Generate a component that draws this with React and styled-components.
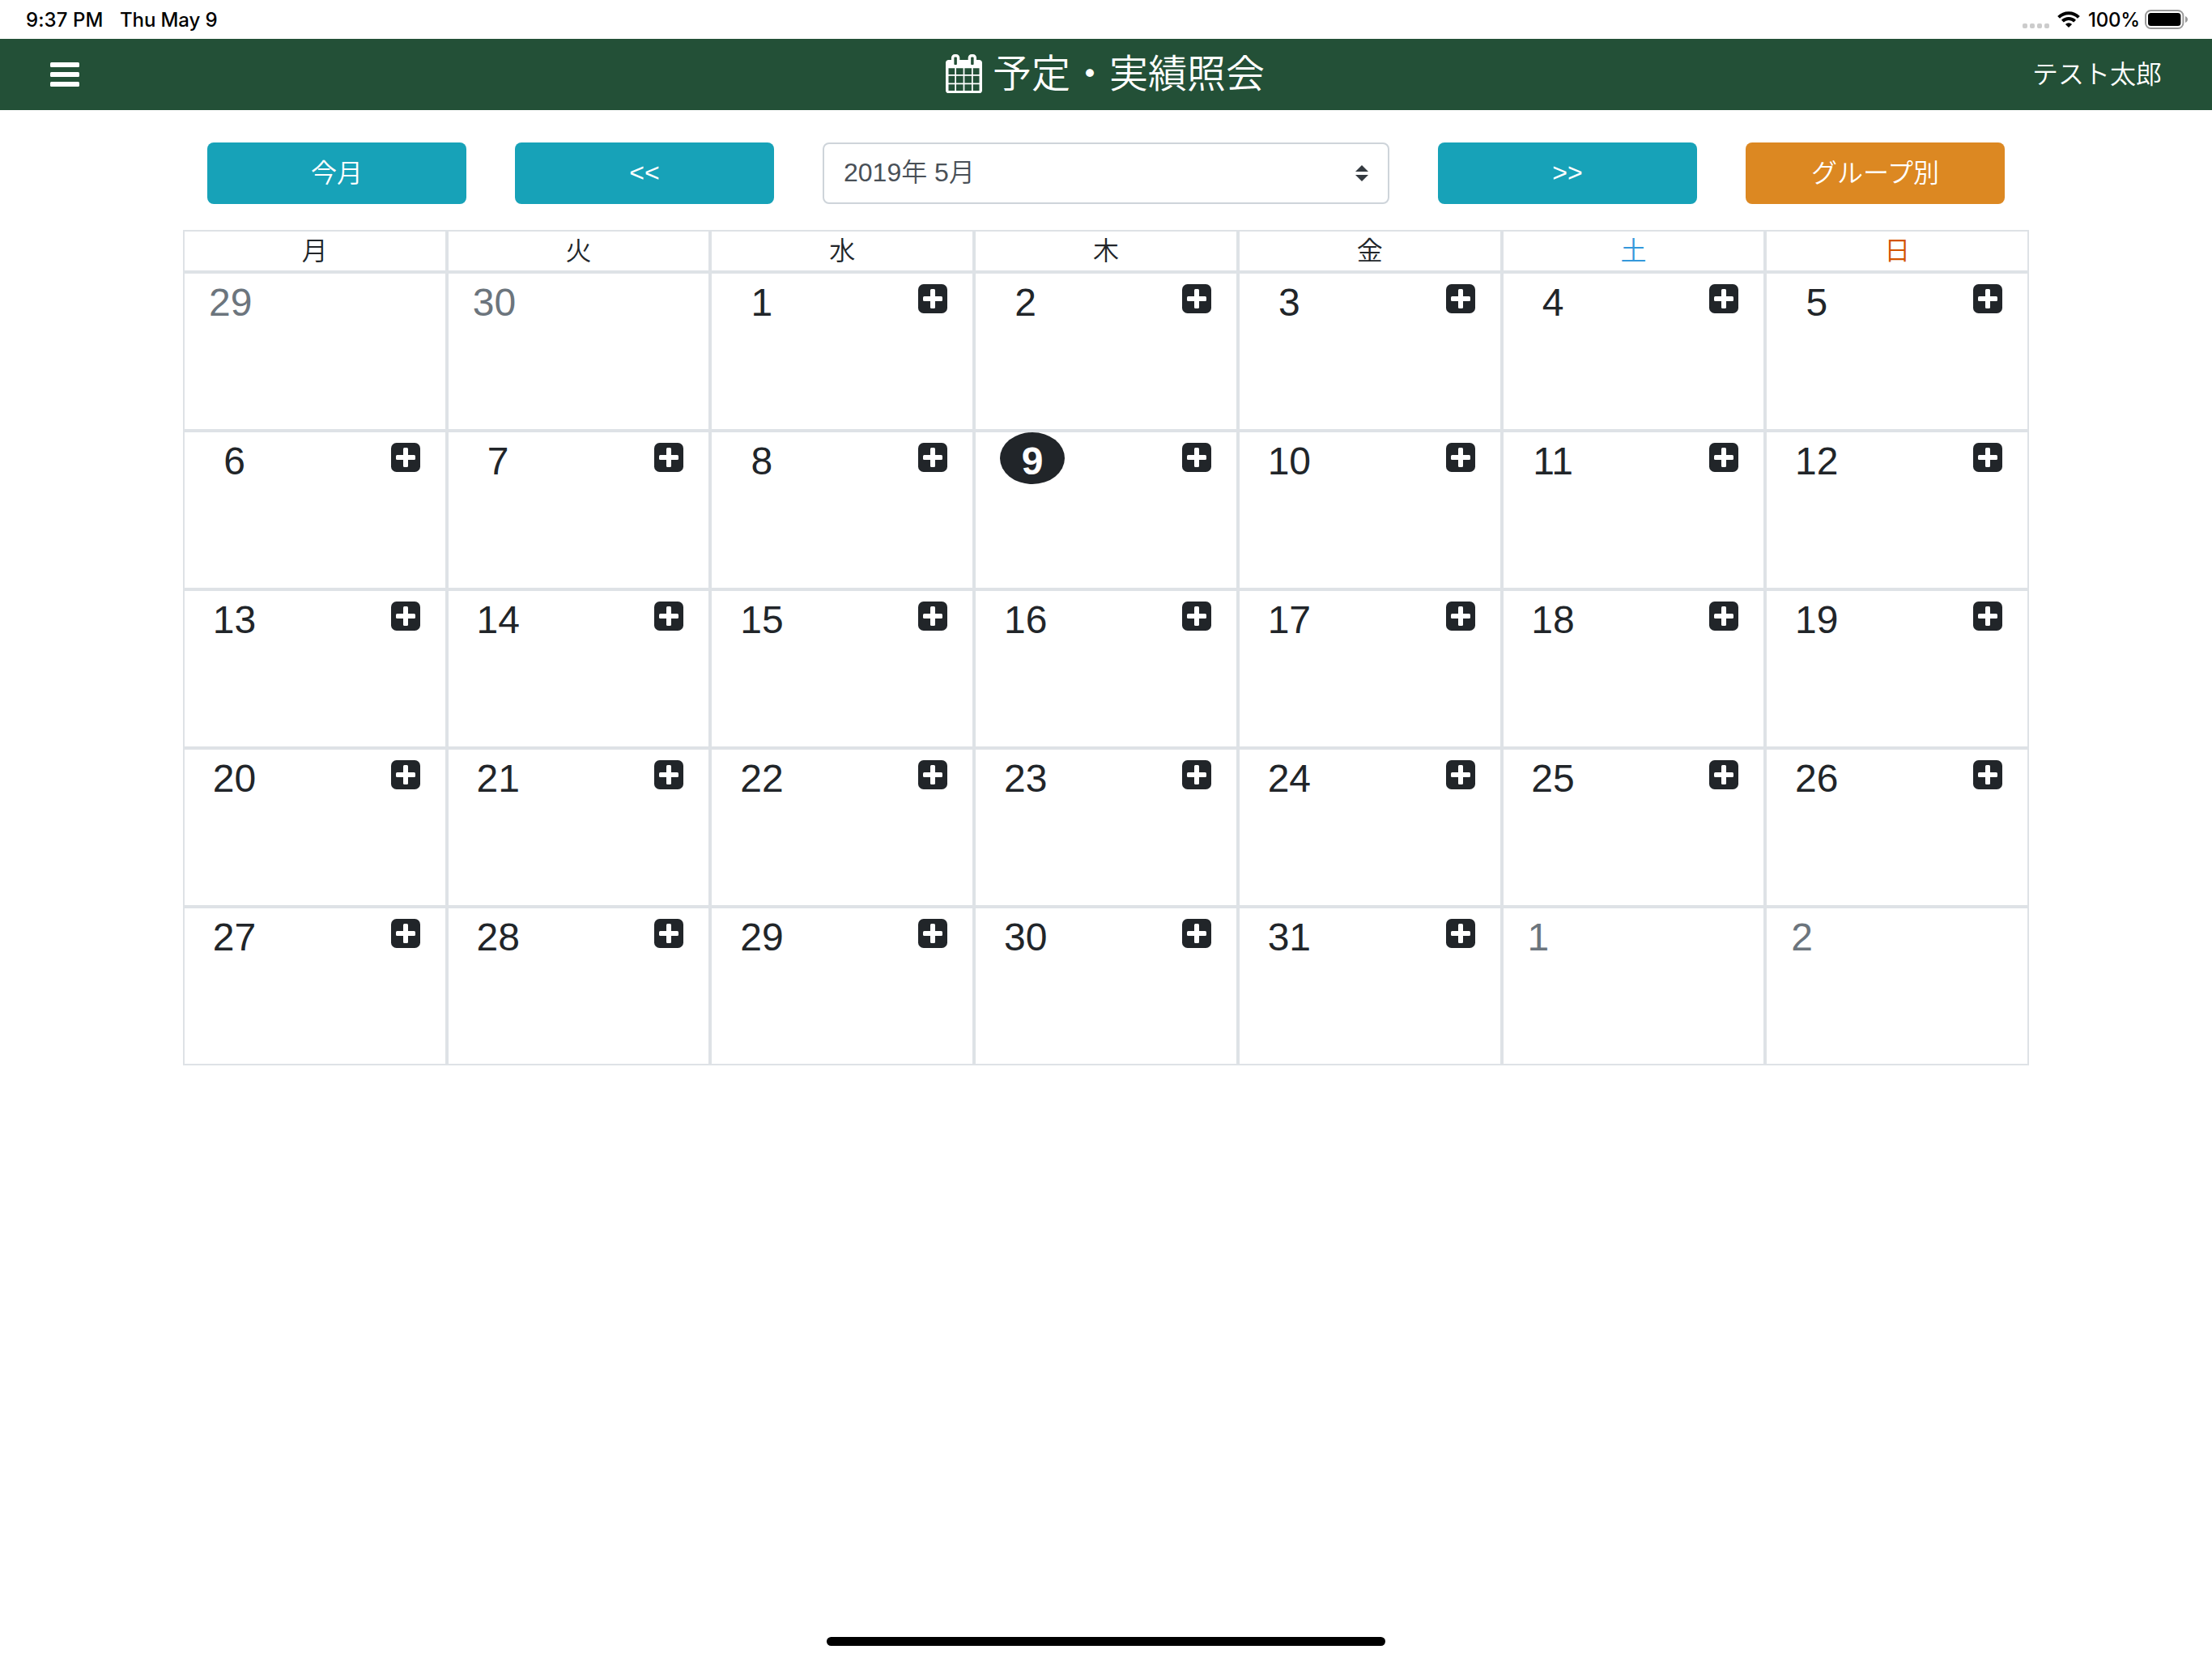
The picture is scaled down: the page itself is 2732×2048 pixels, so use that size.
import React from "react";
import styled, { createGlobalStyle } from "styled-components";

const GlobalStyle = createGlobalStyle`
  * {
    box-sizing: border-box;
  }
  body {
    margin: 0;
    background: #fff;
    color: #212529;
    font-family: "Liberation Sans", "Noto Sans CJK JP", sans-serif;
    font-size: 32px;
    font-weight: 350;
    line-height: 48px;
  }
`;

const Page = styled.div`
  display: flex;
  flex-direction: column;
  width: 2732px;
  height: 2048px;
  overflow: hidden;
`;

const StatusBar = styled.div`
  display: flex;
  justify-content: space-between;
  height: 48px;
  padding: 0 30px 0 32px;
  color: #000;
  font-family: Inter, sans-serif;
  font-size: 24px;
  font-weight: 500;
  line-height: 47px;
`;

const StatusGroup = styled.div`
  display: flex;
  align-items: center;
`;

const StatusText = styled.span`
  width: ${(props) => props.$width}px;
  letter-spacing: ${(props) => props.$spacing || 0}px;
  white-space: nowrap;
`;

const SignalDots = styled.div`
  display: flex;
  gap: 3px;
  margin: 15px 10px 0 0;
`;

const Dot = styled.span`
  width: 6px;
  height: 6px;
  border-radius: 2px;
  background: #ccc;
`;

const WifiIcon = styled.svg`
  width: 28px;
  height: 20px;
  margin-right: 10px;
`;

const BatteryIcon = styled.svg`
  width: 53px;
  height: 24px;
`;

const Header = styled.header`
  display: grid;
  grid-template-columns: 1fr auto 1fr;
  align-items: center;
  height: 88px;
  padding: 0 62px;
  background: #235037;
  color: #fff;
`;

const MenuButton = styled.button`
  display: flex;
  justify-self: start;
  padding: 0;
  border: 0;
  background: none;
  color: #fff;

  svg {
    width: 36px;
    height: 30px;
  }
`;

const Title = styled.h1`
  display: flex;
  align-items: center;
  gap: 13px;
  margin: 0 2px 0 0;
  font-size: 48px;
  font-weight: 350;
  line-height: 72px;
`;

const CalendarIcon = styled.svg`
  width: 45px;
  height: 48.4px;
  margin-bottom: 2px;
`;

const UserName = styled.span`
  justify-self: end;
`;

const Container = styled.main`
  width: 2280px;
  margin: 40px auto 0;
`;

const Toolbar = styled.div`
  display: grid;
  grid-template-columns: 320px 320px 700px 320px 320px;
  gap: 60px;
  padding: 0 30px;
  margin-bottom: 32px;
`;

const Button = styled.button`
  height: 76px;
  padding: 0 0 ${(props) => (props.$arrow ? 3 : 1)}px;
  border: 0;
  border-radius: 8px;
  background: ${(props) => (props.$orange ? "#dc8822" : "#17a2b8")};
  color: #fff;
  font: inherit;
`;

const MonthSelect = styled.div`
  display: flex;
  align-items: center;
  justify-content: space-between;
  height: 76px;
  padding: 0 24px;
  border: 2px solid #ced4da;
  border-radius: 8px;
  color: #495057;

  svg {
    width: 16px;
    height: 20px;
  }
`;

const MonthLabel = styled.span`
  padding-bottom: 2px;
`;

const Week = styled.div`
  display: grid;
  grid-template-columns: repeat(7, 1fr);
`;

const colors = { sat: "#3498db", sun: "#d35400" };

const WeekDay = styled.div`
  height: 52px;
  border: 2px solid #dee2e6;
  color: ${(props) => colors[props.$kind] || "#212529"};
  text-align: center;
`;

const Day = styled.div`
  display: flex;
  align-items: flex-start;
  justify-content: space-between;
  height: 196px;
  padding: 0 31px 0 30px;
  border: 2px solid #dee2e6;
`;

const DayNumber = styled.span`
  width: ${(props) => (props.$today ? 80 : 63)}px;
  height: 64px;
  border-radius: 50%;
  background: ${(props) => (props.$today ? "#212529" : "none")};
  color: ${(props) =>
    props.$today ? "#fff" : props.$other ? "#6c757d" : "#212529"};
  font-size: 48px;
  font-weight: ${(props) => (props.$today ? 700 : 400)};
  line-height: 72px;
  text-align: ${(props) => (props.$other ? "left" : "center")};
`;

const AddButton = styled.button`
  display: flex;
  margin-top: 13px;
  padding: 0;
  border: 0;
  background: none;
  color: #212529;

  svg {
    width: 36px;
    height: 36px;
  }
`;

const HomeIndicator = styled.div`
  width: 690px;
  height: 11px;
  margin: auto auto 15px;
  border-radius: 6px;
  background: #000;
`;

const weekDays = [
  { label: "月" },
  { label: "火" },
  { label: "水" },
  { label: "木" },
  { label: "金" },
  { label: "土", kind: "sat" },
  { label: "日", kind: "sun" },
];

const TODAY = 9;

// 5 weeks starting on Monday, April 29
const weeks = [0, 1, 2, 3, 4].map((week) =>
  weekDays.map((_, index) => {
    const day = week * 7 + index - 1;
    if (day < 1) return { number: day + 30, other: true };
    if (day > 31) return { number: day - 31, other: true };
    return { number: day, today: day === TODAY };
  })
);

const App = () => {
  return (
    <Page>
      <GlobalStyle />
      <StatusBar>
        <StatusGroup>
          <StatusText $width={116} $spacing={0.1}>9:37 PM</StatusText>
          <StatusText $width={122} $spacing={-0.1}>Thu May 9</StatusText>
        </StatusGroup>
        <StatusGroup>
          <SignalDots>
            <Dot />
            <Dot />
            <Dot />
            <Dot />
          </SignalDots>
          <WifiIcon viewBox="0 0 28 20">
            <path
              d="M1.6 7.3a17.6 17.6 0 0 1 24.8 0M6.4 12.1a10.8 10.8 0 0 1 15.2 0"
              fill="none"
              stroke="#000"
              strokeWidth="4"
            />
            <path d="M14 20l-4.1-4.1a5.8 5.8 0 0 1 8.2 0z" />
          </WifiIcon>
          <StatusText $width={70} $spacing={-0.2}>100%</StatusText>
          <BatteryIcon viewBox="0 0 53 24">
            <rect
              x="1"
              y="1"
              width="46.4"
              height="22"
              rx="6.5"
              fill="none"
              stroke="#999"
              strokeWidth="2"
            />
            <rect x="4" y="4" width="40.4" height="16" rx="3.5" />
            <path d="M50 8c4 1.6 4 6.4 0 8z" fill="#999" />
          </BatteryIcon>
        </StatusGroup>
      </StatusBar>

      <Header>
        <MenuButton aria-label="menu">
          <svg viewBox="0 0 36 30" fill="currentColor">
            <rect width="36" height="6" rx="1.5" />
            <rect y="12" width="36" height="6" rx="1.5" />
            <rect y="24" width="36" height="6" rx="1.5" />
          </svg>
        </MenuButton>
        <Title>
          <CalendarIcon viewBox="0 0 1664 1792" fill="currentColor">
            <path d="M128 1664h288v-288h-288v288zM480 1664h320v-288h-320v288zM128 1312h288v-320h-288v320zM480 1312h320v-320h-320v320zM128 928h288v-288h-288v288zM864 1664h320v-288h-320v288zM480 928h320v-288h-320v288zM1248 1664h288v-288h-288v288zM864 1312h320v-320h-320v320zM512 448v-288q0-13-9.5-22.5t-22.5-9.5h-64q-13 0-22.5 9.5t-9.5 22.5v288q0 13 9.5 22.5t22.5 9.5h64q13 0 22.5-9.5t9.5-22.5zM1248 1312h288v-320h-288v320zM864 928h320v-288h-320v288zM1248 928h288v-288h-288v288zM1280 448v-288q0-13-9.5-22.5t-22.5-9.5h-64q-13 0-22.5 9.5t-9.5 22.5v288q0 13 9.5 22.5t22.5 9.5h64q13 0 22.5-9.5t9.5-22.5zM1664 384v1280q0 52-38 90t-90 38h-1408q-52 0-90-38t-38-90v-1280q0-52 38-90t90-38h128v-96q0-66 47-113t113-47h64q66 0 113 47t47 113v96h384v-96q0-66 47-113t113-47h64q66 0 113 47t47 113v96h128q52 0 90 38t38 90z" />
          </CalendarIcon>
          予定・実績照会
        </Title>
        <UserName>テスト太郎</UserName>
      </Header>

      <Container>
        <Toolbar>
          <Button>今月</Button>
          <Button $arrow>&lt;&lt;</Button>
          <MonthSelect>
            <MonthLabel>2019年 5月</MonthLabel>
            <svg viewBox="0 0 4 5">
              <path fill="#343a40" d="M2 0L0 2h4zm0 5L0 3h4z" />
            </svg>
          </MonthSelect>
          <Button $arrow>&gt;&gt;</Button>
          <Button $orange>グループ別</Button>
        </Toolbar>

        <Week>
          {weekDays.map((day) => (
            <WeekDay key={day.label} $kind={day.kind}>
              {day.label}
            </WeekDay>
          ))}
        </Week>
        {weeks.map((week, index) => (
          <Week key={index}>
            {week.map((day) => (
              <Day key={day.number}>
                <DayNumber $today={day.today} $other={day.other}>
                  {day.number}
                </DayNumber>
                {!day.other && (
                  <AddButton aria-label="add">
                    <svg viewBox="0 0 36 36">
                      <rect width="36" height="36" rx="6.75" fill="currentColor" />
                      <rect x="6" y="15" width="24" height="6" rx="1.5" fill="#fff" />
                      <rect x="15" y="6" width="6" height="24" rx="1.5" fill="#fff" />
                    </svg>
                  </AddButton>
                )}
              </Day>
            ))}
          </Week>
        ))}
      </Container>

      <HomeIndicator />
    </Page>
  );
};

export default App;
